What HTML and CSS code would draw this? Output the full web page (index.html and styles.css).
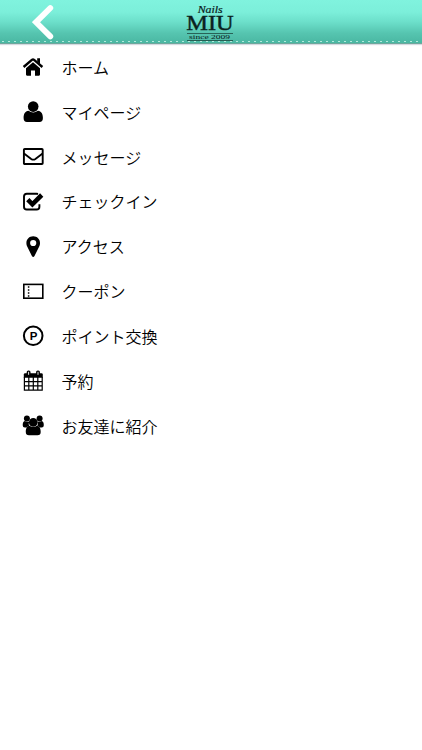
FILE: index.html
```html
<!DOCTYPE html>
<html lang="ja">
<head>
    <meta charset="UTF-8">
    <meta name="viewport" content="width=device-width, initial-scale=1">
    <title>Nails MIU</title>
    <link rel="stylesheet" href="styles.css">
</head>
<body>
    <header class="header">
        <a href="#" class="back">
            <svg width="22" height="36" viewBox="0 0 22 36"><path d="M18.3 4 L4 18.2 L18.3 32.4" fill="none" stroke="#fff" stroke-width="5.8" stroke-linecap="round"/></svg>
        </a>
        <div class="logo">
            <svg width="54" height="44" viewBox="0 0 54 44">
                <g fill="#0a211d" text-anchor="middle">
                    <text class="logo-script" x="26.2" y="12.6" textLength="25" lengthAdjust="spacingAndGlyphs">Nails</text>
                    <text class="logo-name" x="26" y="29.8" textLength="47.5" lengthAdjust="spacingAndGlyphs">MIU</text>
                    <text class="logo-since" x="25.6" y="39" textLength="41" lengthAdjust="spacingAndGlyphs">since 2009</text>
                </g>
                <path d="M3 33.5 H49 M3 40.5 H49" stroke="#0a211d" stroke-width="0.6"/>
            </svg>
        </div>
    </header>

    <ul class="menu">
        <li>
            <svg class="icon" viewBox="0 0 22 22">
                <path d="M4 12.2 L11 6.3 L18 12.2 V18.6 Q18 19.7 17 19.7 H13 V14.4 H9 V19.7 H5 Q4 19.7 4 18.6 Z"/>
                <path d="M15.2 2.3 H18 V8 L15.2 5.6 Z"/>
                <path d="M1.6 11 L9.9 3.9 Q11 3 12.1 3.9 L20.4 11" fill="none" stroke="#000" stroke-width="2.4"/>
            </svg>
            <span>ホーム</span>
        </li>
        <li>
            <svg class="icon" viewBox="0 0 22 22">
                <circle cx="11.2" cy="5.6" r="5.3"/>
                <path d="M6.5 9.7 Q11.2 13.3 15.9 9.7 C19.4 10 20.9 13 20.9 17 Q20.9 20.9 17.5 20.9 H5 Q1.6 20.9 1.6 17 C1.6 13 3 10 6.5 9.7 Z"/>
            </svg>
            <span>マイページ</span>
        </li>
        <li>
            <svg class="icon" viewBox="0 0 22 22">
                <g fill="none" stroke="#000" stroke-width="1.9">
                    <rect x="1.9" y="3" width="18.8" height="15" rx="0.8"/>
                    <path d="M2 7.5 L9.2 12.9 Q11.3 14.4 13.4 12.9 L20.6 7.5"/>
                </g>
            </svg>
            <span>メッセージ</span>
        </li>
        <li>
            <svg class="icon" viewBox="0 0 22 22">
                <path d="M16 3 Q15.4 2.8 14.5 2.8 H4.8 Q2 2.8 2 5.6 V15.7 Q2 18.5 4.8 18.5 H14.6 Q17.4 18.5 17.4 15.7 V13.2" fill="none" stroke="#000" stroke-width="1.9"/>
                <path d="M5.8 8.7 L10.4 13.3 L19.7 4" fill="none" stroke="#000" stroke-width="4.6"/>
            </svg>
            <span>チェックイン</span>
        </li>
        <li>
            <svg class="icon" viewBox="0 0 22 22">
                <path fill-rule="evenodd" d="M11.2 0.3 C7.3 0.3 4.4 3.2 4.4 6.9 C4.4 8.4 4.7 9.3 5.2 10.4 L9.9 20 Q11.2 21.9 12.5 20 L17.2 10.4 C17.7 9.3 18 8.4 18 6.9 C18 3.2 15.1 0.3 11.2 0.3 Z M11.2 3.9 A3.1 3.1 0 1 1 11.2 10.1 A3.1 3.1 0 1 1 11.2 3.9 Z"/>
            </svg>
            <span>アクセス</span>
        </li>
        <li>
            <svg class="icon" viewBox="0 0 22 22">
                <rect x="1.8" y="3.4" width="19" height="13.8" fill="none" stroke="#000" stroke-width="1.6"/>
                <path d="M6.6 5.2 V16.6" stroke="#000" stroke-width="1.5" stroke-dasharray="1.5 1.5"/>
            </svg>
            <span>クーポン</span>
        </li>
        <li>
            <svg class="icon" viewBox="0 0 22 22">
                <circle cx="11.2" cy="10.8" r="9.3" fill="none" stroke="#000" stroke-width="2"/>
                <text class="point" x="11.6" y="14.7" text-anchor="middle">P</text>
            </svg>
            <span>ポイント交換</span>
        </li>
        <li>
            <svg class="icon" viewBox="0 0 22 22">
                <path d="M1.8 4.5 Q1.8 3.2 3.2 3.2 H19.4 Q20.8 3.2 20.8 4.5 V7.8 H1.8 Z"/>
                <path d="M2.4 7 V20.2 H20.2 V7 M6.8 7 V20 M11.3 7 V20 M15.8 7 V20 M2.4 11.6 H20.2 M2.4 15.9 H20.2" fill="none" stroke="#000" stroke-width="1.2"/>
                <rect x="4.7" y="0.4" width="3.8" height="5.5" rx="1.7"/>
                <rect x="14.1" y="0.4" width="3.8" height="5.5" rx="1.7"/>
                <path d="M6.6 1.8 V4.8 M16 1.8 V4.8" stroke="#fff" stroke-width="0.9"/>
            </svg>
            <span>予約</span>
        </li>
        <li>
            <svg class="icon" viewBox="0 0 22 22">
                <circle cx="4.9" cy="3.5" r="3"/>
                <circle cx="17.6" cy="3.5" r="3"/>
                <path d="M2.8 6 Q5 7.4 7.4 6.2 Q6.2 8.5 7.2 11.2 Q5.5 11.3 4.7 12.5 H2.8 Q0.7 12.5 0.7 10.3 Q0.7 6.5 2.8 6 Z"/>
                <path d="M19.7 6 Q17.5 7.4 15.1 6.2 Q16.3 8.5 15.3 11.2 Q17 11.3 17.8 12.5 H19.7 Q21.8 12.5 21.8 10.3 Q21.8 6.5 19.7 6 Z"/>
                <circle cx="11.25" cy="7.4" r="4.3"/>
                <path d="M7.6 10.8 Q11.2 13.2 14.9 10.8 C17.8 11.1 18.7 14 18.7 17 Q18.7 20.3 15.5 20.3 H7 Q3.8 20.3 3.8 17 C3.8 14 4.7 11.1 7.6 10.8 Z"/>
            </svg>
            <span>お友達に紹介</span>
        </li>
    </ul>
</body>
</html>
```

FILE: styles.css
```css
body {
    margin: 0;
    background: #fff;
    color: #000;
    font-family: "Noto Sans CJK JP", sans-serif;
}

.header {
    display: grid;
    grid-template-columns: 1fr 54px 1fr;
    height: 44px;
    box-sizing: border-box;
    background:
        repeating-linear-gradient(90deg, transparent 0 2px, #b4eadd 2px 4px, transparent 4px 6px) 0 41px / 100% 1px no-repeat,
        linear-gradient(#80f3de 0, #7cefda 12px, #6cdfca 22px, #56c5b0 33px, #4ab7a2 43px);
    border-bottom: 1px solid #6fa79c;
    box-shadow: 0 1px 1px #d5d9e0;
}

.back {
    padding: 4px 0 0 32px;
}

.back svg, .logo svg {
    display: block;
}

.logo-script {
    font: italic 10px/1 "Liberation Serif", serif;
    stroke: #0a211d;
    stroke-width: 0.2px;
}

.logo-name {
    font: 20px/1 "Liberation Serif", serif;
    stroke: #0a211d;
    stroke-width: 0.4px;
}

.logo-since {
    font: 7px/1 "Liberation Serif", serif;
}

.menu {
    margin: 0;
    padding: 1px 0 0;
    list-style: none;
}

.menu li {
    display: flex;
    align-items: center;
    gap: 17.5px;
    height: 44.85px;
    padding-left: 22px;
    font-size: 16px;
    font-weight: 350;
    line-height: 24px;
}

.menu span {
    padding-bottom: 1px;
}

.icon {
    width: 22px;
    height: 22px;
}

.point {
    font: bold 11.5px "Liberation Sans", sans-serif;
}
```
